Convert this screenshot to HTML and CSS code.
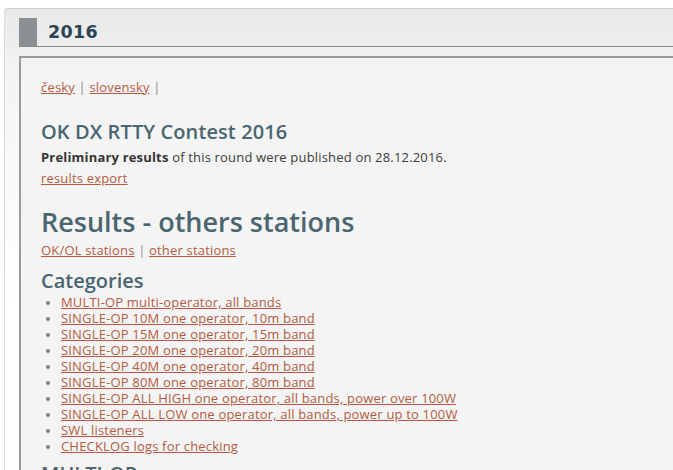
FILE: index.html
```html
<!DOCTYPE html>
<html>
<head>
<meta charset="utf-8">
<link rel="stylesheet" href="styles.css">
</head>
<body>
<div class="panel">
  <div class="panel-head">
    <span class="mark"></span>
    <h2 class="title">2016</h2>
  </div>
  <div class="content">
    <p class="langs"><a href="#">česky</a> <span class="sep">|</span> <a href="#">slovensky</a> <span class="sep">|</span></p>
    <h3 class="contest">OK DX RTTY Contest 2016</h3>
    <p class="info"><b>Preliminary results</b> of this round were published on 28.12.2016.</p>
    <p class="export"><a href="#">results export</a></p>
    <h1 class="big">Results - others stations</h1>
    <p class="tabs"><a href="#">OK/OL stations</a> <span class="sep">|</span> <a href="#">other stations</a></p>
    <h2 class="cat">Categories</h2>
    <ul class="cats">
      <li><a href="#">MULTI-OP multi-operator, all bands</a></li>
      <li><a href="#">SINGLE-OP 10M one operator, 10m band</a></li>
      <li><a href="#">SINGLE-OP 15M one operator, 15m band</a></li>
      <li><a href="#">SINGLE-OP 20M one operator, 20m band</a></li>
      <li><a href="#">SINGLE-OP 40M one operator, 40m band</a></li>
      <li><a href="#">SINGLE-OP 80M one operator, 80m band</a></li>
      <li><a href="#">SINGLE-OP ALL HIGH one operator, all bands, power over 100W</a></li>
      <li><a href="#">SINGLE-OP ALL LOW one operator, all bands, power up to 100W</a></li>
      <li><a href="#">SWL listeners</a></li>
      <li><a href="#">CHECKLOG logs for checking</a></li>
    </ul>
    <h2 class="cat">MULTI-OP</h2>
  </div>
</div>
</body>
</html>
```
FILE: styles.css
```css
html, body { margin: 0; padding: 0; background: #fff; }
body {
  font-family: "Open Sans", "DejaVu Sans", sans-serif;
  font-size: 13px;
  letter-spacing: 0.18px;
  color: #3c3c3c;
  overflow: hidden;
  height: 470px;
}
.panel {
  margin: 8px 0 0 4px;
  border-top: 1px solid #cfcfcf;
  border-left: 1px solid #dcdcdc;
  border-top-left-radius: 4px;
  background: linear-gradient(to bottom, #e9e9e9 0, #eeeeee 36px, #f3f3f3 50px, #f7f7f7 120px, #ffffff 300px);
  height: 470px;
}
.panel-head {
  display: flex;
  align-items: stretch;
  margin-left: 14px;
  padding-top: 9px;
  height: 28px;
  border-bottom: 1px solid #8a8a8a;
}
.mark {
  width: 18px;
  background: #8b9092;
}
.title {
  margin: 0 0 0 11px;
  font-family: "DejaVu Sans", sans-serif;
  font-weight: bold;
  font-size: 17.5px;
  letter-spacing: 0.3px;
  line-height: 28px;
  color: #2b4556;
}
.content {
  margin: 9px 0 0 14px;
  border-top: 2px solid #9a9a9a;
  border-left: 2px solid #9a9a9a;
  background: #f3f4f3;
  padding: 19px 0 0 20px;
  height: 420px;
}
a { color: #b65a43; text-decoration: underline; }
.sep { color: #8a8a8a; }
p { margin: 0; line-height: 20px; }
.langs { margin-bottom: 20px; }
.contest {
  margin: 0;
  font-size: 20px;
  letter-spacing: 0.1px;
  line-height: 30px;
  font-weight: 600;
  color: #4b6571;
}
.info b { color: #353535; }
.export { line-height: 22px; }
.big {
  margin: 16px 0 0 0;
  font-size: 27px;
  letter-spacing: 0;
  line-height: 34px;
  font-weight: 600;
  color: #4b6571;
}
.tabs { line-height: 22px; }
.cat {
  margin: 7px 0 0 0;
  font-size: 20px;
  letter-spacing: 0;
  line-height: 26px;
  font-weight: 600;
  color: #4b6571;
}
.cats {
  margin: 0;
  padding: 0 0 0 20px;
  list-style: disc;
}
.cats li { line-height: 16px; color: #7a7a7a; }
.cats li::marker { font-size: 11px; }
```
